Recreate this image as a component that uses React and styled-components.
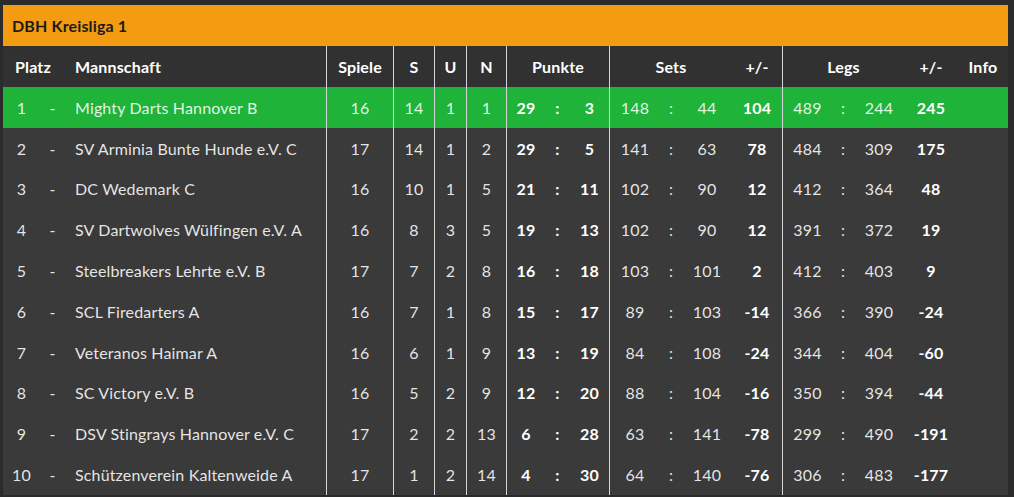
import React from 'react';
import styled, { createGlobalStyle } from 'styled-components';

const GlobalStyle = createGlobalStyle`
  html, body {
    margin: 0;
    padding: 0;
    background: #2b2b2b;
    font-family: Lato, "Open Sans", "Liberation Sans", sans-serif;
    letter-spacing: 0.15px;
  }
`;

const COLUMNS = '37px 25px 261px 67px 41px 32px 40px 39px 25px 39px 51px 22px 50px 50px 50px 22px 50px 54px 50px';

const Frame = styled.div`
  width: 1014px;
  height: 497px;
  box-sizing: border-box;
  padding: 5px 6px 0 3px;
  background: #2b2b2b;
  overflow: hidden;
`;

const Title = styled.div`
  height: 41px;
  display: flex;
  align-items: center;
  padding-left: 9px;
  background: #f39c12;
  color: #1b1b1b;
  font-size: 16px;
  font-weight: 700;
`;

const Row = styled.div`
  display: grid;
  grid-template-columns: ${COLUMNS};
  height: ${p => (p.$head ? '41px' : '40.8px')};
  background: ${p => (p.$head ? '#313131' : p.$leader ? '#1fb33a' : '#3a3a3a')};
`;

const Cell = styled.div`
  display: flex;
  align-items: center;
  justify-content: ${p => (p.$align === 'left' ? 'flex-start' : 'center')};
  padding-left: ${p => p.$pad || 0}px;
  grid-column: span ${p => p.$span || 1};
  border-left: ${p => (p.$line ? '1px solid #d6d6d6' : 'none')};
  color: ${p => (p.$bold ? '#ffffff' : 'rgba(255, 255, 255, 0.88)')};
  font-size: 16px;
  font-weight: ${p => (p.$bold ? 700 : 400)};
  white-space: nowrap;
`;

const teams = [
  ['1', 'Mighty Darts Hannover B', 16, 14, 1, 1, 29, 3, 148, 44, 104, 489, 244, 245],
  ['2', 'SV Arminia Bunte Hunde e.V. C', 17, 14, 1, 2, 29, 5, 141, 63, 78, 484, 309, 175],
  ['3', 'DC Wedemark C', 16, 10, 1, 5, 21, 11, 102, 90, 12, 412, 364, 48],
  ['4', 'SV Dartwolves Wülfingen e.V. A', 16, 8, 3, 5, 19, 13, 102, 90, 12, 391, 372, 19],
  ['5', 'Steelbreakers Lehrte e.V. B', 17, 7, 2, 8, 16, 18, 103, 101, 2, 412, 403, 9],
  ['6', 'SCL Firedarters A', 16, 7, 1, 8, 15, 17, 89, 103, -14, 366, 390, -24],
  ['7', 'Veteranos Haimar A', 16, 6, 1, 9, 13, 19, 84, 108, -24, 344, 404, -60],
  ['8', 'SC Victory e.V. B', 16, 5, 2, 9, 12, 20, 88, 104, -16, 350, 394, -44],
  ['9', 'DSV Stingrays Hannover e.V. C', 17, 2, 2, 13, 6, 28, 63, 141, -78, 299, 490, -191],
  ['10', 'Schützenverein Kaltenweide A', 17, 1, 2, 14, 4, 30, 64, 140, -76, 306, 483, -177],
];

const App = () => (
  <>
    <GlobalStyle />
    <Frame>
      <Title>DBH Kreisliga 1</Title>
      <Row $head>
        <Cell $span={2} $align="left" $pad={12} $bold>Platz</Cell>
        <Cell $align="left" $pad={10} $bold>Mannschaft</Cell>
        <Cell $line $bold>Spiele</Cell>
        <Cell $line $bold>S</Cell>
        <Cell $line $bold>U</Cell>
        <Cell $line $bold>N</Cell>
        <Cell $line $span={3} $bold>Punkte</Cell>
        <Cell $line $span={3} $bold>Sets</Cell>
        <Cell $bold>+/-</Cell>
        <Cell $line $span={3} $bold>Legs</Cell>
        <Cell $bold>+/-</Cell>
        <Cell $bold>Info</Cell>
      </Row>
      {teams.map(([rank, name, games, s, u, n, p1, p2, s1, s2, sd, l1, l2, ld]) => (
        <Row key={rank} $leader={rank === '1'}>
          <Cell>{rank}</Cell>
          <Cell>-</Cell>
          <Cell $align="left" $pad={10}>{name}</Cell>
          <Cell $line>{games}</Cell>
          <Cell $line>{s}</Cell>
          <Cell $line>{u}</Cell>
          <Cell $line>{n}</Cell>
          <Cell $line $bold>{p1}</Cell>
          <Cell $bold>:</Cell>
          <Cell $bold>{p2}</Cell>
          <Cell $line>{s1}</Cell>
          <Cell>:</Cell>
          <Cell>{s2}</Cell>
          <Cell $bold>{sd}</Cell>
          <Cell $line>{l1}</Cell>
          <Cell>:</Cell>
          <Cell>{l2}</Cell>
          <Cell $bold>{ld}</Cell>
          <Cell />
        </Row>
      ))}
    </Frame>
  </>
);

export default App;
